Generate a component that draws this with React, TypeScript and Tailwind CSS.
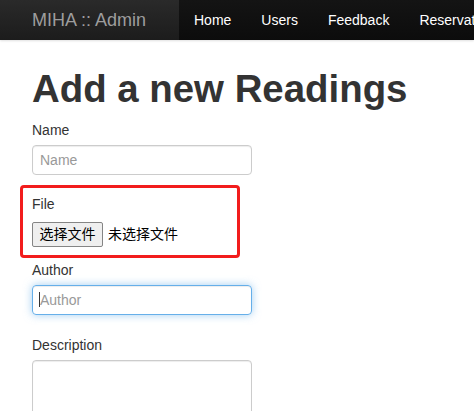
import React from 'react';

const navItems = ['Home', 'Users', 'Feedback', 'Reservations'];

export default function App() {
    return (
        <div className="h-[411px] overflow-hidden bg-white font-['Liberation_Sans','Noto_Sans_CJK_SC',sans-serif] text-[#333]">
            {/* Navbar */}
            <nav className="flex h-[40px] overflow-hidden whitespace-nowrap shadow-[0_1px_2px_rgba(0,0,0,0.12)]">
                <div className="flex w-[179px] shrink-0 items-center bg-gradient-to-b from-[#2a2a2a] to-[#1c1c1c] pl-[32px]">
                    <span className="text-[18px] leading-none text-[#9d9d9d]">MIHA :: Admin</span>
                </div>
                <ul className="flex flex-1 items-center bg-gradient-to-b from-[#141414] to-[#0c0c0c]">
                    {navItems.map((item) => (
                        <li key={item} className="px-[15px] text-[14px] leading-none text-white">
                            {item}
                        </li>
                    ))}
                </ul>
            </nav>

            <div className="px-[32px]">
                <h1 className="mt-[28px] text-[38.4px] font-bold leading-[42px] text-[#333]">Add a new Readings</h1>

                {/* Name */}
                <div className="mt-[10px]">
                    <label className="block text-[14px] leading-[20px]">Name</label>
                    <input
                        type="text"
                        placeholder="Name"
                        className="mt-[5px] block h-[30px] w-[220px] rounded-[4px] border border-[#ccc] px-[7px] text-[14px] text-[#555] shadow-[inset_0_1px_1px_rgba(0,0,0,0.075)] outline-none placeholder:text-[#999]"
                    />
                </div>

                {/* File (highlighted) */}
                <div className="ml-[-12px] mt-[10px] h-[73px] w-[220px] rounded-[4px] border-[3px] border-[#f21c1c] pl-[9px] pt-[6px]">
                    <label className="block text-[14px] leading-[20px]">File</label>
                    <div className="mt-[8px] flex items-center">
                        <span className="flex h-[25px] items-center rounded-[2px] border border-[#858585] bg-[#efefef] px-[6.5px] text-[14px] text-black">
                            选择文件
                        </span>
                        <span className="ml-[5px] text-[14px] text-black">未选择文件</span>
                    </div>
                </div>

                {/* Author */}
                <div className="mt-[2px]">
                    <label className="block text-[14px] leading-[20px]">Author</label>
                    <div className="relative mt-[5px] w-[220px]">
                        <input
                            type="text"
                            placeholder="Author"
                            className="block h-[30px] w-[220px] rounded-[4px] border border-[#66afe9] px-[7px] text-[14px] text-[#555] shadow-[inset_0_1px_1px_rgba(0,0,0,0.075),0_0_8px_rgba(102,175,233,0.6)] outline-none placeholder:text-[#999]"
                        />
                        <span className="absolute left-[7px] top-[7px] h-[15px] w-px bg-[#333]" />
                    </div>
                </div>

                {/* Description */}
                <div className="mt-[20px]">
                    <label className="block text-[14px] leading-[20px]">Description</label>
                    <textarea className="mt-[5px] block h-[80px] w-[220px] resize-none rounded-[4px] border border-[#ccc] px-[7px] text-[14px] shadow-[inset_0_1px_1px_rgba(0,0,0,0.075)] outline-none" />
                </div>
            </div>
        </div>
    );
}
